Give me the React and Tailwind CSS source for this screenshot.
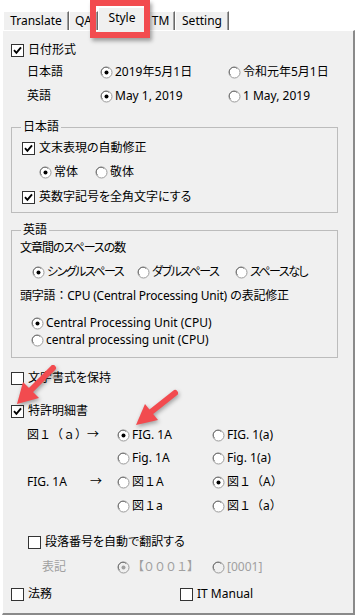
import React from "react";

function Check({ checked }) {
  return (
    <span className="w-[13px] h-[13px] border border-[#333] bg-white flex items-center justify-center shrink-0 mr-[4px]">
      {checked && (
        <svg width="9" height="9" viewBox="0 0 9 9">
          <path d="M1 4.2 L3.4 6.8 L8 1.4" stroke="#000" strokeWidth="1.9" fill="none" />
        </svg>
      )}
    </span>
  );
}

function Radio({ checked, disabled }) {
  return (
    <svg width="13" height="13" viewBox="0 0 13 13" className="shrink-0 mr-[2px]">
      <circle cx="6.5" cy="6.5" r="5.5" fill={disabled ? "#f0f0f0" : "#fff"} stroke="#9a9a9a" />
      <path d="M2.6 9.2 A4.6 4.6 0 0 1 9.2 2.6" stroke="#707070" fill="none" />
      {checked && <circle cx="6.5" cy="6.5" r="2" fill={disabled ? "#a0a0a0" : "#000"} />}
    </svg>
  );
}

function Opt({ checked, disabled, className = "", textClass = "", children }) {
  return (
    <div className={"flex items-center " + className}>
      <Radio checked={checked} disabled={disabled} />
      <span className={(disabled ? "text-[#a0a0a0] " : "") + textClass}>{children}</span>
    </div>
  );
}

function Box({ checked, className = "", textClass = "", children }) {
  return (
    <div className={"flex items-center " + className}>
      <Check checked={checked} />
      <span className={textClass}>{children}</span>
    </div>
  );
}

function Tab({ className, selected, children }) {
  return (
    <div
      className={
        "flex items-center justify-center bg-[#f0f0f0] border-l border-t border-white border-r border-r-[#696969] shadow-[inset_-1px_0_0_#a0a0a0] " +
        (selected ? "relative z-10 h-[24px] mb-[-1px] pb-[3px]" : "h-[19px]") +
        " " +
        className
      }
    >
      {children}
    </div>
  );
}

// proportional kana, closer to the narrow UI font in the screenshot
const kana = "[font-feature-settings:'palt']";
const kanaTight = "[font-feature-settings:'palt'] tracking-[-1.5px]";

export default function App() {
  return (
    <div className="relative w-[356px] h-[616px] bg-white overflow-hidden whitespace-nowrap text-[12px] leading-none text-black font-['Noto_Sans','Noto_Sans_CJK_JP',sans-serif]">
      <div className="flex items-end h-[30px] pl-[3px]">
        <Tab className="w-[66px]">Translate</Tab>
        <Tab className="w-[29px]">QA</Tab>
        <Tab className="w-[48px]" selected>Style</Tab>
        <Tab className="w-[29px]">TM</Tab>
        <Tab className="w-[54px]">Setting</Tab>
      </div>

      <div className="ml-[2px] w-[353px] h-[585px] bg-[#f0f0f0] border-l border-t border-white border-r-2 border-b-2 border-r-[#8a8a8a] border-b-[#8a8a8a] pt-[10px]">
        <Box checked className="h-[18px] pl-[8px]">日付形式</Box>
        <div className="flex items-center h-[18px] mt-[4px] pl-[24px]">
          <span className="w-[73px]">日本語</span>
          <Opt checked className="w-[128px]">2019年5月1日</Opt>
          <Opt>令和元年5月1日</Opt>
        </div>
        <div className="flex items-center h-[18px] mt-[6px] pl-[24px]">
          <span className="w-[73px]">英語</span>
          <Opt checked className="w-[128px]">May 1, 2019</Opt>
          <Opt>1 May, 2019</Opt>
        </div>

        <fieldset className="mt-[13px] ml-[8px] w-[327px] border border-[#bcbcbc] pb-[6px]">
          <legend className="ml-[9px] px-[2px] h-[18px] leading-[18px]">日本語</legend>
          <Box checked className="h-[18px] mt-[3px] pl-[10px]" textClass={kana}>文末表現の自動修正</Box>
          <div className="flex items-center h-[18px] mt-[6px] pl-[27px]">
            <Opt checked className="w-[56px]">常体</Opt>
            <Opt>敬体</Opt>
          </div>
          <Box checked className="h-[18px] mt-[7px] pl-[10px]" textClass={kana}>英数字記号を全角文字にする</Box>
        </fieldset>

        <fieldset className="mt-[8px] ml-[8px] w-[327px] border border-[#bcbcbc] pb-[8px]">
          <legend className="ml-[9px] px-[2px] h-[18px] leading-[18px]">英語</legend>
          <div className="flex items-center h-[18px] pl-[8px] [font-feature-settings:'palt'] tracking-[-1px]">文章間のスペースの数</div>
          <div className="flex items-center h-[18px] mt-[6px] pl-[20px]">
            <Opt checked className="w-[105px]" textClass={kanaTight}>シングルスペース</Opt>
            <Opt className="w-[98px]" textClass={kanaTight}>ダブルスペース</Opt>
            <Opt textClass={kanaTight}>スペースなし</Opt>
          </div>
          <div className="flex items-center h-[18px] mt-[6px] pl-[8px] tracking-[-0.2px]">
            頭字語：CPU (Central Processing Unit) の表記修正
          </div>
          <Opt checked className="h-[18px] mt-[9px] pl-[19px]">Central Processing Unit (CPU)</Opt>
          <Opt className="h-[18px] mt-[-1px] pl-[19px]">central processing unit (CPU)</Opt>
        </fieldset>

        <Box className="h-[18px] mt-[11px] pl-[8px]" textClass={kana}>文字書式を保持</Box>
        <Box checked className="h-[18px] mt-[15px] pl-[8px]">特許明細書</Box>
        <div className="flex items-center h-[18px] mt-[6px] pl-[24px]">
          <span className="w-[90px]">図１（ａ）→</span>
          <Opt checked className="w-[95px]">FIG. 1A</Opt>
          <Opt>FIG. 1(a)</Opt>
        </div>
        <div className="flex items-center h-[18px] mt-[5px] pl-[114px]">
          <Opt className="w-[95px]">Fig. 1A</Opt>
          <Opt>Fig. 1(a)</Opt>
        </div>
        <div className="flex items-center h-[18px] mt-[6px] pl-[24px]">
          <span className="w-[63px]">FIG. 1A</span>
          <span className="w-[27px]">→</span>
          <Opt className="w-[95px]">図１A</Opt>
          <Opt checked>図１（A）</Opt>
        </div>
        <div className="flex items-center h-[18px] mt-[6px] pl-[114px]">
          <Opt className="w-[95px]">図１a</Opt>
          <Opt>図１（a）</Opt>
        </div>
        <Box className="h-[18px] mt-[18px] pl-[25px]" textClass={kana}>段落番号を自動で翻訳する</Box>
        <div className="flex items-center h-[18px] mt-[7px] pl-[39px]">
          <span className="w-[75px] text-[#a0a0a0]">表記</span>
          <Opt checked disabled className="w-[95px]" textClass="tracking-[-1px]">【０００１】</Opt>
          <Opt disabled>[0001]</Opt>
        </div>
        <div className="flex items-center h-[18px] mt-[9px] pl-[8px]">
          <Box className="w-[169px]">法務</Box>
          <Box>IT Manual</Box>
        </div>
      </div>

      {/* annotation: highlight box */}
      <div className="absolute left-[90px] top-[0px] w-[60px] h-[38px] border-[6px] border-[#f24b4f] shadow-[2px_3px_4px_rgba(0,0,0,0.35)] z-20" />

      {/* annotation: arrows */}
      <svg
        className="absolute left-0 top-0 z-20 pointer-events-none"
        width="356"
        height="616"
        viewBox="0 0 356 616"
        style={{ filter: "drop-shadow(1px 2px 2px rgba(0,0,0,0.35))" }}
      >
        <line x1="53" y1="368" x2="31" y2="390" stroke="#f24b4f" strokeWidth="6" strokeLinecap="round" />
        <polygon points="17,404 23,382 39,398" fill="#f24b4f" />
        <line x1="175" y1="393" x2="151" y2="412" stroke="#f24b4f" strokeWidth="6" strokeLinecap="round" />
        <polygon points="136,425 145,404 158,420" fill="#f24b4f" />
      </svg>
    </div>
  );
}
